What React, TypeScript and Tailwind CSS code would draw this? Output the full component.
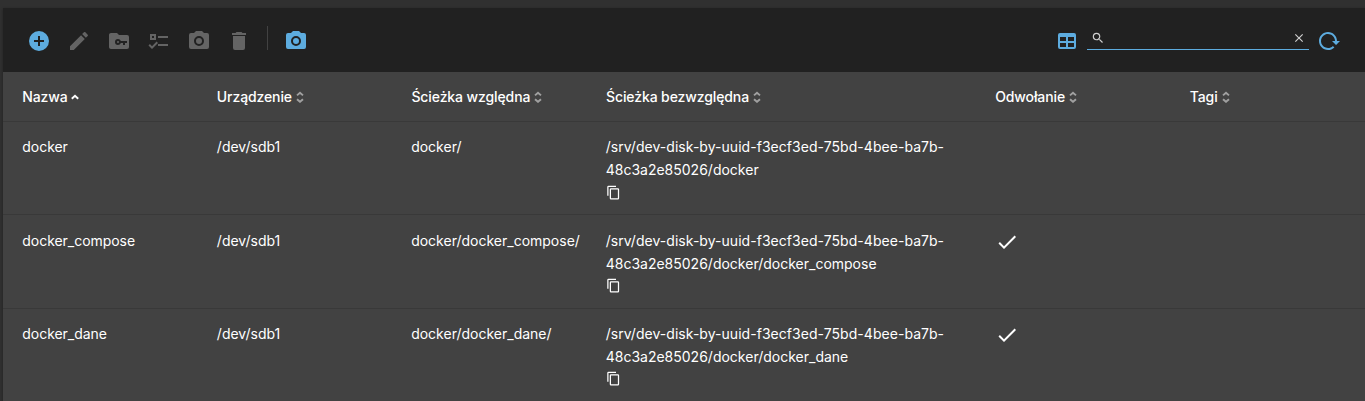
import React from "react";

const paths = {
  add: "M17,13H13V17H11V13H7V11H11V7H13V11H17M12,2A10,10 0 0,0 2,12A10,10 0 0,0 12,22A10,10 0 0,0 22,12A10,10 0 0,0 12,2Z",
  pencil:
    "M20.71,7.04C21.1,6.65 21.1,6 20.71,5.63L18.37,3.29C18,2.9 17.35,2.9 16.96,3.29L15.12,5.12L18.87,8.87M3,17.25V21H6.75L17.81,9.93L14.06,6.18L3,17.25Z",
  folderKey:
    "M10,4L12,6H20A2,2 0 0,1 22,8V18A2,2 0 0,1 20,20H4C2.89,20 2,19.1 2,18V6C2,4.89 2.89,4 4,4H10M13.8,12C13.4,10.8 12.3,10 11,10A3,3 0 0,0 8,13A3,3 0 0,0 11,16C12.3,16 13.4,15.2 13.8,14H16V16H18V14H20V12H13.8M11,12A1,1 0 0,1 12,13A1,1 0 0,1 11,14A1,1 0 0,1 10,13A1,1 0 0,1 11,12Z",
  checks:
    "M3,5H9V11H3V5M5,7V9H7V7H5M11,7H21V9H11V7M11,15H21V17H11V15M5,20L1.5,16.5L2.91,15.09L5,17.17L9.59,12.59L11,14L5,20Z",
  camera:
    "M4,4H7L9,2H15L17,4H20A2,2 0 0,1 22,6V18A2,2 0 0,1 20,20H4A2,2 0 0,1 2,18V6A2,2 0 0,1 4,4M12,7A5,5 0 0,0 7,12A5,5 0 0,0 12,17A5,5 0 0,0 17,12A5,5 0 0,0 12,7M12,9A3,3 0 0,1 15,12A3,3 0 0,1 12,15A3,3 0 0,1 9,12A3,3 0 0,1 12,9Z",
  trash:
    "M19,4H15.5L14.5,3H9.5L8.5,4H5V6H19M6,19A2,2 0 0,0 8,21H16A2,2 0 0,0 18,19V7H6V19Z",
  table:
    "M5,4H19A2,2 0 0,1 21,6V18A2,2 0 0,1 19,20H5A2,2 0 0,1 3,18V6A2,2 0 0,1 5,4M5,8V12H11V8H5M13,8V12H19V8H13M5,14V18H11V14H5M13,14V18H19V14H13Z",
  reload:
    "M2 12C2 16.97 6.03 21 11 21C13.39 21 15.68 20.06 17.4 18.4L15.9 16.9C14.63 18.25 12.86 19 11 19C4.76 19 1.64 11.46 6.05 7.05C10.46 2.64 18 5.77 18 12H15L19 16H19.1L23 12H20C20 7.03 15.97 3 11 3C6.03 3 2 7.03 2 12Z",
  search:
    "M9.5,3A6.5,6.5 0 0,1 16,9.5C16,11.11 15.41,12.59 14.44,13.73L14.71,14H15.5L20.5,19L19,20.5L14,15.5V14.71L13.73,14.44C12.59,15.41 11.11,16 9.5,16A6.5,6.5 0 0,1 3,9.5A6.5,6.5 0 0,1 9.5,3M9.5,5C7,5 5,7 5,9.5C5,12 7,14 9.5,14C12,14 14,12 14,9.5C14,7 12,5 9.5,5Z",
  close:
    "M19,6.41L17.59,5L12,10.59L6.41,5L5,6.41L10.59,12L5,17.59L6.41,19L12,13.41L17.59,19L19,17.59L13.41,12L19,6.41Z",
  copy: "M19,21H8V7H19M19,5H8A2,2 0 0,0 6,7V21A2,2 0 0,0 8,23H19A2,2 0 0,0 21,21V7A2,2 0 0,0 19,5M16,1H4A2,2 0 0,0 2,3V17H4V3H16V1Z",
  check: "M21,7L9,19L3.5,13.5L4.91,12.09L9,16.17L19.59,5.59L21,7Z",
};

function Icon({ name, className = "size-6" }: { name: keyof typeof paths; className?: string }) {
  return (
    <svg viewBox="0 0 24 24" fill="currentColor" className={`shrink-0 ${className}`}>
      <path d={paths[name]} />
    </svg>
  );
}

function ToolButton({ name, label, active = false }: { name: keyof typeof paths; label: string; active?: boolean }) {
  return (
    <button
      aria-label={label}
      className={`flex size-10 items-center justify-center ${active ? "text-[#5dacdf]" : "text-[#646464]"}`}
    >
      <Icon name={name} />
    </button>
  );
}

function SortMark({ sorted }: { sorted: boolean }) {
  return sorted ? (
    <svg viewBox="0 0 8 12" className="mt-px ml-[3px] h-3 w-2 text-white" fill="none" stroke="currentColor" strokeWidth="1.9">
      <path d="M0.8 7.8L4 4.8L7.2 7.8" />
    </svg>
  ) : (
    <svg viewBox="0 0 8 12" className="mt-px ml-1 h-3 w-2 text-[#a0a0a0]" fill="none" stroke="currentColor" strokeWidth="1.9">
      <path d="M1 4.4L4 1.8L7 4.4M1 8.2L4 10.8L7 8.2" />
    </svg>
  );
}

const columns = [
  { title: "Nazwa", span: "col-span-1" },
  { title: "Urządzenie", span: "col-span-1" },
  { title: "Ścieżka względna", span: "col-span-1" },
  { title: "Ścieżka bezwzględna", span: "col-span-2" },
  { title: "Odwołanie", span: "col-span-1" },
  { title: "Tagi", span: "col-span-1" },
];

const rows = [
  { name: "docker", path: "docker/", referenced: false },
  { name: "docker_compose", path: "docker/docker_compose/", referenced: true },
  { name: "docker_dane", path: "docker/docker_dane/", referenced: true },
];

export default function App() {
  return (
    <div className="h-[401px] w-full overflow-hidden bg-[#303030] pt-2 pl-[3px] font-['Inter',sans-serif] text-sm text-white">
      <div className="h-[500px] bg-[#424242] shadow-[0_1px_3px_rgba(0,0,0,0.3)]">
        <div className="flex h-16 items-center bg-[#212121] pr-4 pl-4 pb-px pt-[3px]">
          <ToolButton name="add" label="Utwórz" active />
          <ToolButton name="pencil" label="Edytuj" />
          <ToolButton name="folderKey" label="Uprawnienia" />
          <ToolButton name="checks" label="Lista kontroli dostępu" />
          <ToolButton name="camera" label="Migawka" />
          <ToolButton name="trash" label="Usuń" />
          <div className="mr-2 ml-2 h-6 w-px -translate-y-[3px] bg-[#424242]" />
          <ToolButton name="camera" label="Migawki" active />
          <div className="flex-1" />
          <ToolButton name="table" label="Kolumny" active />
          <div className="mb-[21px] flex h-[26px] w-[222px] items-start justify-between self-end border-b border-[#5dacdf] pt-[7px] pr-[3px] pl-1 text-[#cfcfcf]">
            <Icon name="search" className="size-3.5" />
            <Icon name="close" className="size-3.5" />
          </div>
          <ToolButton name="reload" label="Odśwież" active />
        </div>

        <div className="grid h-[50px] grid-cols-7 items-center border-b border-[#393939] font-medium tracking-[-0.11px]">
          {columns.map((c, i) => (
            <div key={c.title} className={`flex items-center pl-[19.3px] ${c.span}`}>
              <span>{c.title}</span>
              <SortMark sorted={i === 0} />
            </div>
          ))}
        </div>

        {rows.map((r) => (
          <div
            key={r.name}
            className="grid h-[93.3px] grid-cols-7 border-b border-[#393939] pt-[13.4px] leading-[23px]"
          >
            <div className="pl-[19.3px] tracking-[-0.04px]">{r.name}</div>
            <div className="pl-[19.3px]">/dev/sdb1</div>
            <div className="pl-[19px]">{r.path}</div>
            <div className="col-span-2 pl-[19px]">
              <div className="tracking-[0.04px]">/srv/dev-disk-by-uuid-f3ecf3ed-75bd-4bee-ba7b-</div>
              <div>48c3a2e85026/{r.name === "docker" ? "docker" : `docker/${r.name}`}</div>
              <Icon name="copy" className="mt-[3.4px] size-[15px]" />
            </div>
            <div className="pl-[19.5px] pt-[1px]">{r.referenced && <Icon name="check" className="size-6" />}</div>
            <div />
          </div>
        ))}
      </div>
    </div>
  );
}
